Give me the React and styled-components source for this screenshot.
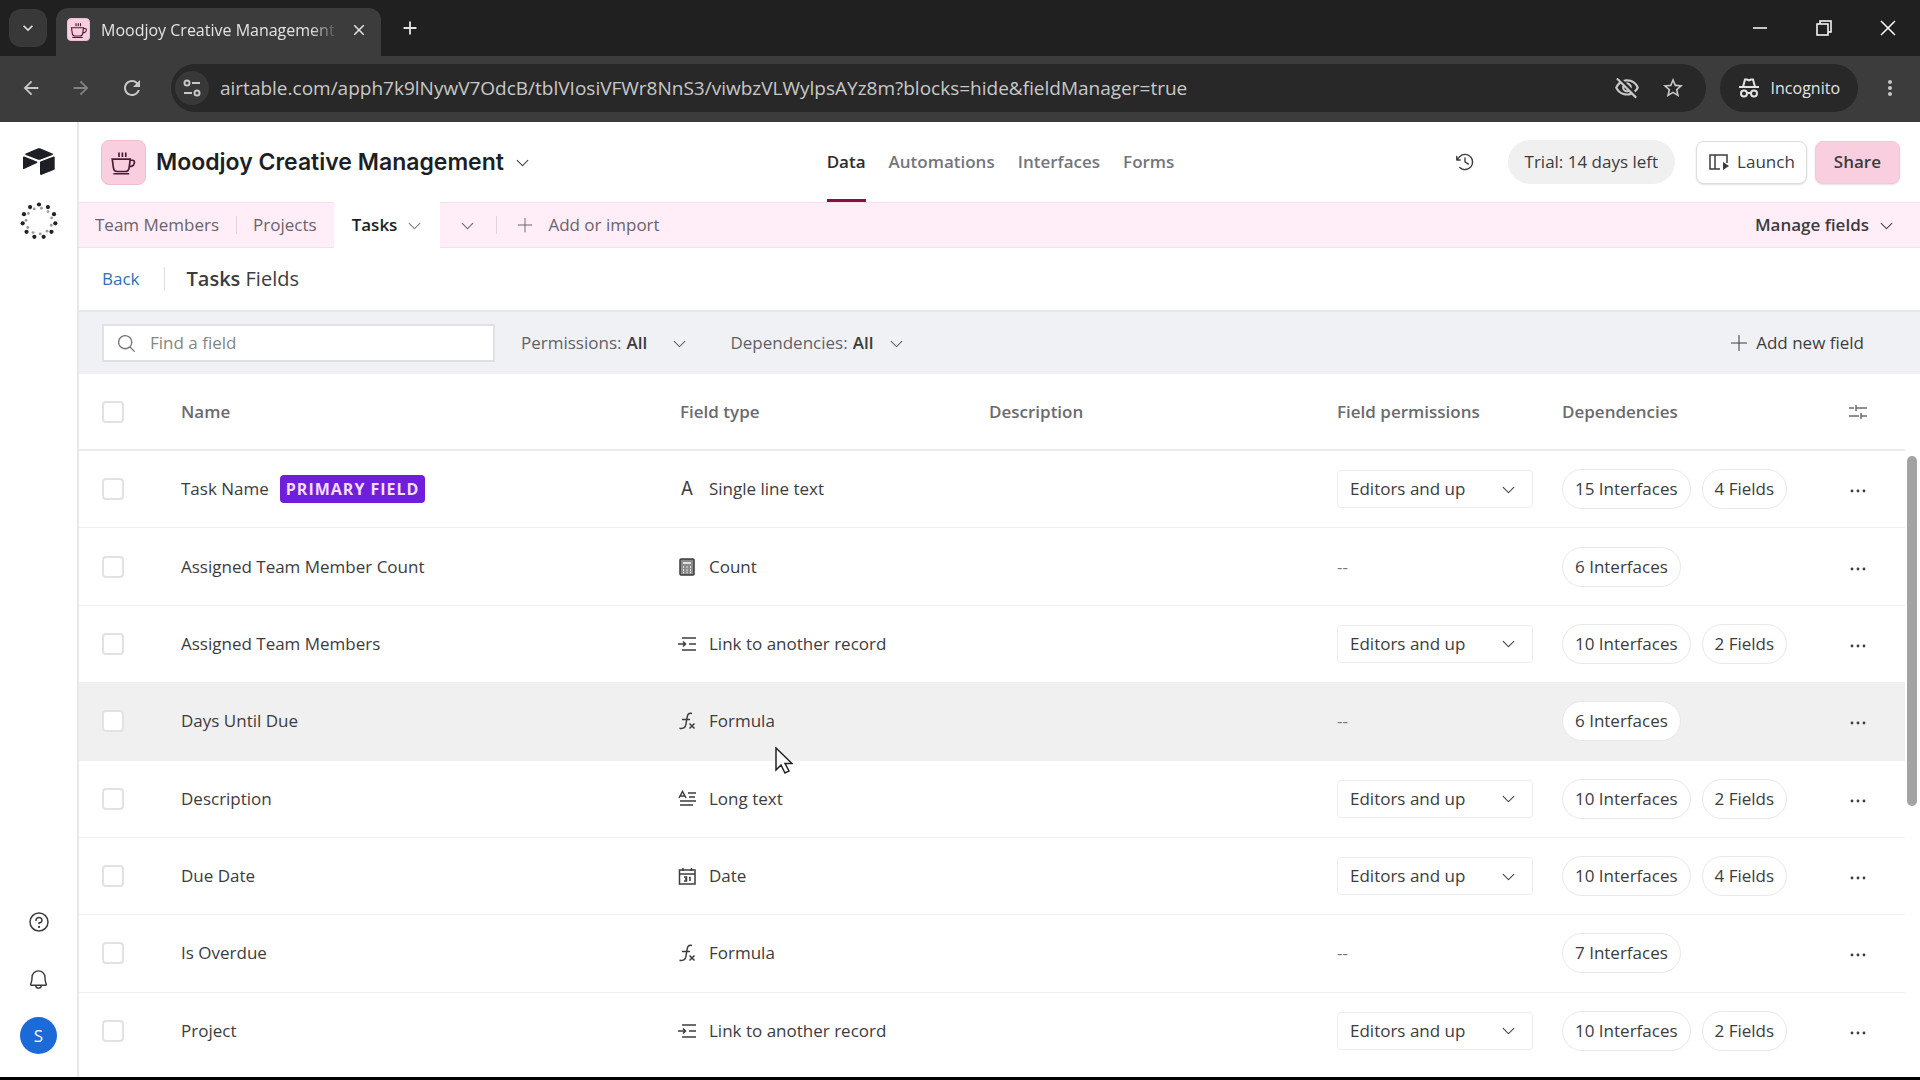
import React from "react";
import styled, { createGlobalStyle } from "styled-components";
import {
  PiBell,
  PiCaretDown,
  PiClockCounterClockwise,
  PiMagnifyingGlass,
  PiPlusLight,
  PiQuestion,
} from "react-icons/pi";
import {
  MdArrowBack,
  MdArrowForward,
  MdClose,
  MdKeyboardArrowDown,
  MdMoreVert,
  MdOutlineVisibilityOff,
  MdRefresh,
  MdStarOutline,
  MdAdd,
} from "react-icons/md";

const fields = [
  { name: "Task Name", primary: true, type: "Single line text", icon: "text", editable: true, deps: ["15 Interfaces", "4 Fields"] },
  { name: "Assigned Team Member Count", type: "Count", icon: "count", deps: ["6 Interfaces"] },
  { name: "Assigned Team Members", type: "Link to another record", icon: "link", editable: true, deps: ["10 Interfaces", "2 Fields"] },
  { name: "Days Until Due", type: "Formula", icon: "formula", active: true, deps: ["6 Interfaces"] },
  { name: "Description", type: "Long text", icon: "long", editable: true, deps: ["10 Interfaces", "2 Fields"] },
  { name: "Due Date", type: "Date", icon: "date", editable: true, deps: ["10 Interfaces", "4 Fields"] },
  { name: "Is Overdue", type: "Formula", icon: "formula", deps: ["7 Interfaces"] },
  { name: "Project", type: "Link to another record", icon: "link", editable: true, deps: ["10 Interfaces", "2 Fields"] },
];

const typeIcons = {
  count: (
    <>
      <rect x="2" y="1" width="14" height="16" rx="1" fill="#8b8b8b" />
      <path d="M5 5h8M5 9h1M8.5 9h1M12 9h1M5 12h1M8.5 12h1M12 12h1M5 14.5h1M8.5 14.5h1M12 14.5h1" stroke="#fff" strokeWidth="1.7" />
    </>
  ),
  link: <path d="M4 3h14M11 9h7M4 15h14M0 9h7M5 6.5L7.5 9L5 11.5" />,
  formula: <path d="M14 1.5c-4-.8-4.5 1.5-5 4.5l-1 6c-.6 3.5-2 5-6.5 4.2M4 7.5h8M11.5 11.5l5 5M16.5 11.5l-5 5" />,
  long: (
    <>
      <path d="M10 3h8M11 7h6M2 11h16M2 15h13" />
      <path d="M1 8L4.5 1.5L8 8M2.5 6h4" />
    </>
  ),
  date: (
    <>
      <path d="M1.5 3h15.5v14H1.5zM1.5 7h15.5M5 1v3M13.5 1v3" />
      <path d="M6 10h2.5v4H6M7 12h1.5M11 10.5h1V14" />
    </>
  ),
};

function TypeIcon({ name }) {
  if (name === "text") return <LetterIcon>A</LetterIcon>;
  return (
    <svg width="18" height="18" viewBox="0 0 18 18" fill="none" stroke="currentColor" strokeWidth="1.5">
      {typeIcons[name]}
    </svg>
  );
}

function CoffeeIcon({ size }) {
  return (
    <svg width={size} height={size} viewBox="0 0 24 24" fill="none" stroke="#4a1c33" strokeWidth="1.5">
      <path d="M2 9h16l-1 7.5q-.5 3.500-3.500 3.500h-7q-3 0-3.500-3.500zM18 10h2q2 0 1.700 2.300T19 15.500h-1.500M3 22h14M8 3v4M11 3v4M14 3v4" />
    </svg>
  );
}

function LoaderIcon() {
  const step = (Math.PI * 2) / 11;
  const angles = [...Array(11).keys()].map((i) => i * step - Math.PI / 2);
  return (
    <svg width="38" height="38" viewBox="-19 -19 38 38">
      {angles.map((a) => (
        <g key={a}>
          <circle cx={16.5 * Math.cos(a)} cy={16.5 * Math.sin(a)} r="2.1" fill="#222" />
          <circle cx={13 * Math.cos(a + step / 3)} cy={13 * Math.sin(a + step / 3)} r="1.4" fill="#999" />
        </g>
      ))}
    </svg>
  );
}

function Caret() {
  return <PiCaretDown size={17} />;
}

export default function App() {
  return (
    <Page>
      <GlobalStyle />
      <TabStrip>
        <TabSearch aria-label="Search tabs">
          <MdKeyboardArrowDown size={20} />
        </TabSearch>
        <BrowserTab>
          <BaseIcon $small>
            <CoffeeIcon size={18} />
          </BaseIcon>
          <TabTitle>Moodjoy Creative Management</TabTitle>
          <PlainButton aria-label="Close tab">
            <MdClose size={18} />
          </PlainButton>
        </BrowserTab>
        <NewTab aria-label="New tab">
          <MdAdd size={22} />
        </NewTab>
        <WindowControls>
          <button aria-label="Minimize">
            <svg width="16" height="16" fill="none" stroke="currentColor" strokeWidth="1.5">
              <path d="M1 8h14" />
            </svg>
          </button>
          <button aria-label="Restore">
            <svg width="16" height="16" fill="none" stroke="currentColor" strokeWidth="1.5">
              <path d="M1 4h11v11H1zM4 4V1h11v11h-3" />
            </svg>
          </button>
          <button aria-label="Close">
            <svg width="16" height="16" fill="none" stroke="currentColor" strokeWidth="1.5">
              <path d="M1 1l14 14M15 1L1 15" />
            </svg>
          </button>
        </WindowControls>
      </TabStrip>

      <Toolbar>
        <NavButtons>
          <PlainButton aria-label="Back">
            <MdArrowBack size={22} />
          </PlainButton>
          <PlainButton aria-label="Forward" $dim>
            <MdArrowForward size={22} />
          </PlainButton>
          <PlainButton aria-label="Reload">
            <MdRefresh size={24} />
          </PlainButton>
        </NavButtons>
        <AddressBar>
          <SiteInfo aria-label="Site information">
            <svg width="20" height="20" fill="none" stroke="currentColor" strokeWidth="2">
              <circle cx="5" cy="5" r="2.5" />
              <path d="M10 5h8M2 15h8" />
              <circle cx="15" cy="15" r="2.5" />
            </svg>
          </SiteInfo>
          <Address
            aria-label="Address"
            readOnly
            value="airtable.com/apph7k9lNywV7OdcB/tblVIosiVFWr8NnS3/viwbzVLWylpsAYz8m?blocks=hide&fieldManager=true"
          />
          <MdOutlineVisibilityOff size={26} />
          <MdStarOutline size={24} />
        </AddressBar>
        <Incognito>
          <svg width="22" height="22" viewBox="0 0 22 22" fill="none" stroke="currentColor" strokeWidth="2">
            <path d="M1 10h20M5 10L7 2.5h2l2 1 2-1h2L17 10" />
            <circle cx="6" cy="16.5" r="3" />
            <circle cx="16" cy="16.5" r="3" />
            <path d="M9 16h4" />
          </svg>
          Incognito
        </Incognito>
        <PlainButton aria-label="Menu">
          <MdMoreVert size={24} />
        </PlainButton>
      </Toolbar>

      <Workspace>
        <Sidebar>
          <svg width="32" height="28" viewBox="0 0 32 28" fill="#1d1f25">
            <path d="M14.5.6L2.8 5.4c-.7.3-.7 1.2 0 1.5l11.8 4.6c1 .4 2.1.4 3.1 0l11.7-4.6c.7-.3.7-1.2 0-1.5L17.6.6c-1-.4-2.1-.4-3.1 0z" />
            <path d="M17 14.3v11.8c0 .6.6 1 1.1.8l13.1-5.1c.3-.1.5-.4.5-.8V9.3c0-.6-.6-1-1.1-.8l-13.1 5c-.3.1-.5.5-.5.8z" />
            <path d="M14 14.9l-3.9 1.9-9.1 4.3c-.5.2-1-.1-1-.6V9.4c0-.7.8-1.1 1.3-.9l12.5 4.9c.7.3.8 1.2.2 1.5z" />
          </svg>
          <LoaderIcon />
          <HelpButton aria-label="Help">
            <PiQuestion size={24} />
          </HelpButton>
          <PlainButton aria-label="Notifications">
            <PiBell size={23} />
          </PlainButton>
          <Avatar>S</Avatar>
        </Sidebar>

        <Main>
          <BaseHeader>
            <BaseName>
              <BaseIcon>
                <CoffeeIcon size={27} />
              </BaseIcon>
              <h1>Moodjoy Creative Management</h1>
              <Caret />
            </BaseName>
            <Nav>
              <NavLink href="#data" $active>Data</NavLink>
              <NavLink href="#automations">Automations</NavLink>
              <NavLink href="#interfaces">Interfaces</NavLink>
              <NavLink href="#forms">Forms</NavLink>
            </Nav>
            <HeaderActions>
              <PlainButton aria-label="History">
                <PiClockCounterClockwise size={22} />
              </PlainButton>
              <Trial>Trial: 14 days left</Trial>
              <ActionButton>
                <svg width="22" height="20" fill="none" stroke="currentColor" strokeWidth="1.5">
                  <path d="M12 17H2V3h17v8M7 3v14" />
                  <path d="M15 10l6 4-6 4z" fill="currentColor" stroke="none" />
                </svg>
                Launch
              </ActionButton>
              <ActionButton $pink>Share</ActionButton>
            </HeaderActions>
          </BaseHeader>

          <TableTabs>
            <TableTab>Team Members</TableTab>
            <Divider />
            <TableTab>Projects</TableTab>
            <TableTab $active>
              Tasks <Caret />
            </TableTab>
            <MoreTables aria-label="All tables">
              <Caret />
            </MoreTables>
            <Divider />
            <AddTable>
              <PiPlusLight size={20} />
              Add or import
            </AddTable>
            <ManageFields>
              Manage fields <Caret />
            </ManageFields>
          </TableTabs>

          <TitleRow>
            <BackLink href="#back">Back</BackLink>
            <h2>
              <b>Tasks</b> Fields
            </h2>
          </TitleRow>

          <FilterBar>
            <Search>
              <PiMagnifyingGlass size={21} />
              <input type="text" placeholder="Find a field" aria-label="Find a field" />
            </Search>
            <Filter $gap={24}>
              Permissions:
              <select defaultValue="All">
                <option>All</option>
              </select>
              <Caret />
            </Filter>
            <Filter $gap={14}>
              Dependencies:
              <select defaultValue="All">
                <option>All</option>
              </select>
              <Caret />
            </Filter>
            <AddField>
              <PiPlusLight size={22} />
              Add new field
            </AddField>
          </FilterBar>

          <TableArea>
            <Table>
              <colgroup>
                <Col $w="102px" />
                <Col $w="499px" />
                <Col $w="309px" />
                <Col />
                <Col $w="225px" />
                <Col $w="248px" />
                <Col $w="95px" />
              </colgroup>
              <thead>
                <tr>
                  <CheckHead>
                    <Checkbox type="checkbox" aria-label="Select all fields" />
                  </CheckHead>
                  <Th>Name</Th>
                  <Th>Field type</Th>
                  <Th>Description</Th>
                  <Th>Field permissions</Th>
                  <Th>Dependencies</Th>
                  <Th $center>
                    <svg width="18" height="18" fill="none" stroke="currentColor" strokeWidth="1.5">
                      <path d="M0 5h5M7 2v6M7 5h11M0 13h10M12 10v6M12 13h6" />
                    </svg>
                  </Th>
                </tr>
              </thead>
              <tbody>
                {fields.map((field) => (
                  <Row key={field.name} $active={field.active}>
                    <CheckCell>
                      <Checkbox type="checkbox" aria-label={`Select ${field.name}`} />
                    </CheckCell>
                    <Td>
                      <FieldName>
                        {field.name}
                        {field.primary && <Badge>PRIMARY FIELD</Badge>}
                      </FieldName>
                    </Td>
                    <Td>
                      <FieldType>
                        <TypeIcon name={field.icon} />
                        {field.type}
                        {field.active && (
                          <Cursor viewBox="0 0 18 28">
                            <path d="M1 1v22l5-5 4 8 4-2-4-7.5h7z" fill="#fff" stroke="#222" strokeWidth="1.5" />
                          </Cursor>
                        )}
                      </FieldType>
                    </Td>
                    <Td />
                    <Td>
                      {field.editable ? (
                        <Permission>
                          <select defaultValue="Editors and up" aria-label={`${field.name} permissions`}>
                            <option>Editors and up</option>
                          </select>
                          <Caret />
                        </Permission>
                      ) : (
                        <Muted>--</Muted>
                      )}
                    </Td>
                    <Td>
                      <Pills>
                        {field.deps.map((dep) => (
                          <Pill key={dep}>{dep}</Pill>
                        ))}
                      </Pills>
                    </Td>
                    <Td $center>
                      <PlainButton aria-label={`${field.name} options`}>
                        <svg width="16" height="16" fill="currentColor">
                          <circle cx="2" cy="10" r="1.4" />
                          <circle cx="8" cy="10" r="1.4" />
                          <circle cx="14" cy="10" r="1.4" />
                        </svg>
                      </PlainButton>
                    </Td>
                  </Row>
                ))}
              </tbody>
            </Table>
            <Scrollbar>
              <ScrollThumb />
            </Scrollbar>
          </TableArea>
        </Main>
      </Workspace>
    </Page>
  );
}

const GlobalStyle = createGlobalStyle`
  * {
    box-sizing: border-box;
  }

  body {
    margin: 0;
    font-family: "Open Sans", "Noto Sans", sans-serif;
    font-size: 17px;
    line-height: 24px;
    color: #3c3c3e;
  }

  button,
  input,
  select {
    font: inherit;
    color: inherit;
  }

  button {
    display: flex;
    align-items: center;
    border: none;
    padding: 0;
    background: none;
    white-space: nowrap;
  }

  select {
    appearance: none;
    border: none;
    padding: 0;
    background: none;
  }

  svg {
    flex-shrink: 0;
  }
`;

const Page = styled.div`
  display: flex;
  flex-direction: column;
  height: 100vh;
  overflow: hidden;
  background: #fff;
  border-bottom: 3px solid #000;
`;

const PlainButton = styled.button`
  opacity: ${(p) => (p.$dim ? 0.5 : 1)};
`;

const TabStrip = styled.div`
  display: flex;
  align-items: center;
  height: 56px;
  padding-left: 9px;
  background: #202020;
  color: #e3e3e3;
`;

const TabSearch = styled.button`
  justify-content: center;
  width: 38px;
  height: 38px;
  border-radius: 12px;
  background: #383838;
`;

const BrowserTab = styled.div`
  display: flex;
  align-items: center;
  align-self: flex-end;
  gap: 11px;
  width: 325px;
  height: 48px;
  margin-left: 9px;
  padding: 0 13px 5px 11px;
  border-radius: 12px 12px 0 0;
  background: #3c3c3c;
`;

const TabTitle = styled.span`
  flex: 1;
  overflow: hidden;
  white-space: nowrap;
  font-size: 16px;
  mask-image: linear-gradient(to right, #000 88%, transparent);
`;

const NewTab = styled.button`
  margin-left: 18px;
`;

const WindowControls = styled.div`
  display: flex;
  gap: 48px;
  margin-left: auto;
  padding-right: 24px;
  color: #fff;
`;

const Toolbar = styled.div`
  display: flex;
  align-items: center;
  height: 66px;
  padding: 0 18px 2px 0;
  background: #3c3c3c;
  color: #c8c8c8;
`;

const NavButtons = styled.div`
  display: flex;
  align-items: center;
  gap: 28px;
  width: 171px;
  padding-left: 20px;
`;

const AddressBar = styled.div`
  display: flex;
  flex: 1;
  align-items: center;
  gap: 21px;
  height: 48px;
  padding: 0 21px 0 4px;
  border-radius: 24px;
  background: #282828;
`;

const SiteInfo = styled.button`
  justify-content: center;
  width: 34px;
  height: 34px;
  border-radius: 17px;
  background: #383838;
`;

const Address = styled.input`
  flex: 1;
  margin-left: -10px;
  padding: 0;
  border: none;
  outline: none;
  background: none;
  font-size: 19px;
`;

const Incognito = styled.div`
  display: flex;
  align-items: center;
  gap: 11px;
  height: 48px;
  margin: 0 20px 0 14px;
  padding: 0 18px;
  border-radius: 24px;
  background: #282828;
  color: #e3e3e3;
  font-size: 16px;
`;

const Workspace = styled.div`
  display: flex;
  flex: 1;
  min-height: 0;
`;

const Sidebar = styled.aside`
  display: flex;
  flex-direction: column;
  align-items: center;
  gap: 26px;
  width: 79px;
  padding: 26px 0 23px;
  border-right: 2px solid #e8e8e8;
`;

const HelpButton = styled.button`
  margin: auto 0 8px;
`;

const Avatar = styled.div`
  width: 37px;
  border-radius: 50%;
  background: #1b6ad8;
  color: #fff;
  line-height: 37px;
  text-align: center;
`;

const Main = styled.main`
  display: flex;
  flex: 1;
  flex-direction: column;
  min-width: 0;
`;

const BaseHeader = styled.header`
  display: grid;
  grid-template-columns: 1fr auto 1fr;
  align-items: center;
  height: 80px;
  padding: 0 20px 0 22px;
`;

const BaseIcon = styled.div`
  display: flex;
  align-items: center;
  justify-content: center;
  flex-shrink: 0;
  width: ${(p) => (p.$small ? "23px" : "45px")};
  height: ${(p) => (p.$small ? "23px" : "45px")};
  border: 1px solid #efbdd2;
  border-radius: ${(p) => (p.$small ? "4px" : "8px")};
  background: #f9cfe0;
`;

const BaseName = styled.div`
  display: flex;
  align-items: center;
  gap: 10px;

  h1 {
    margin: 0;
    color: #1d1f25;
    font-family: Inter, sans-serif;
    font-size: 23px;
    font-weight: 600;
    white-space: nowrap;
  }
`;

const Nav = styled.nav`
  display: flex;
  align-self: stretch;
  gap: 23px;
`;

const NavLink = styled.a`
  padding-top: 28px;
  border-bottom: 3px solid ${(p) => (p.$active ? "#8a0f42" : "transparent")};
  color: ${(p) => (p.$active ? "#2b2d33" : "#74767c")};
  font-weight: 600;
  text-decoration: none;
`;

const HeaderActions = styled.div`
  display: flex;
  align-items: center;
  justify-content: flex-end;
  white-space: nowrap;
`;

const Trial = styled.span`
  margin: 0 21px 0 32px;
  padding: 10px 17px;
  border-radius: 22px;
  background: #f0f0f0;
`;

const ActionButton = styled.button`
  gap: 7px;
  height: 43px;
  margin-left: ${(p) => (p.$pink ? "8px" : "0")};
  padding: 0 ${(p) => (p.$pink ? "18px" : "11px")};
  border: 1px solid ${(p) => (p.$pink ? "#f5c6da" : "#dcdcdc")};
  border-radius: 8px;
  background: ${(p) => (p.$pink ? "#f9cfe0" : "#fff")};
  box-shadow: 0 1px 2px rgba(0, 0, 0, 0.12);
  font-weight: ${(p) => (p.$pink ? 600 : 400)};
`;

const TableTabs = styled.div`
  display: flex;
  align-items: center;
  height: 46px;
  border-top: 1px solid #f0e2ea;
  border-bottom: 1px solid #f0e2ea;
  background: #ffeef8;
  color: #6b626a;
`;

const TableTab = styled.button`
  gap: 9px;
  height: 46px;
  padding: 0 17px 0 ${(p) => (p.$active ? "18px" : "16px")};
  background: ${(p) => (p.$active ? "#fff" : "none")};
  color: ${(p) => (p.$active ? "#1d1f25" : "inherit")};
  font-weight: ${(p) => (p.$active ? 600 : 400)};

  svg {
    color: #777;
  }
`;

const Divider = styled.div`
  width: 1px;
  height: 18px;
  background: #e4d3dc;
`;

const MoreTables = styled.button`
  padding: 0 20px 0 19px;
`;

const AddTable = styled.button`
  gap: 13px;
  padding-left: 18px;
`;

const ManageFields = styled.button`
  gap: 9px;
  margin-left: auto;
  padding-right: 25px;
  color: #3c3c3e;
  font-weight: 600;
`;

const TitleRow = styled.div`
  display: flex;
  align-items: center;
  height: 62px;
  padding-left: 23px;

  h2 {
    margin: 0 0 0 24px;
    padding-left: 22px;
    border-left: 1px solid #e0e0e0;
    font-size: 20px;
    font-weight: 400;
  }

  b {
    font-weight: 600;
  }
`;

const BackLink = styled.a`
  color: #2f70bd;
  text-decoration: none;
`;

const FilterBar = styled.div`
  display: flex;
  align-items: center;
  height: 64px;
  padding: 0 56px 0 23px;
  border-top: 2px solid #e6e7ea;
  background: #f0f1f5;
`;

const Search = styled.div`
  display: flex;
  align-items: center;
  gap: 13px;
  width: 393px;
  height: 38px;
  padding: 0 12px;
  border: 2px solid #e0e1e5;
  background: #fff;
  color: #777;

  input {
    flex: 1;
    min-width: 0;
    padding: 0;
    border: none;
    outline: none;
    background: none;
  }

  input::placeholder {
    color: #858585;
  }
`;

const Filter = styled.label`
  display: flex;
  align-items: center;
  margin-left: 26px;
  color: #5f6165;
  white-space: nowrap;

  & + & {
    margin-left: 42px;
  }

  select {
    margin: 0 ${(p) => p.$gap}px 0 5px;
    color: #3c3c3e;
    font-weight: 600;
  }
`;

const AddField = styled.button`
  gap: 6px;
  margin-left: auto;
`;

const TableArea = styled.div`
  display: flex;
  flex: 1;
  min-height: 0;
  padding-bottom: 7px;
`;

const Table = styled.table`
  flex: 1;
  width: 100%;
  height: 100%;
  border-collapse: separate;
  border-spacing: 0;
  table-layout: fixed;
`;

const Col = styled.col`
  width: ${(p) => p.$w || "auto"};
`;

const Th = styled.th`
  height: 77px;
  padding: 0;
  border-bottom: 2px solid #ebebeb;
  color: #6b6b6e;
  font-weight: 600;
  text-align: ${(p) => (p.$center ? "center" : "left")};

  svg {
    display: block;
    margin: auto;
  }
`;

const CheckHead = styled(Th)`
  padding-left: 23px;
`;

const Td = styled.td`
  height: 77px;
  padding: 0;
  border-bottom: 1px solid #f0f0f0;

  > button {
    margin: ${(p) => (p.$center ? "auto" : "0")};
  }
`;

const CheckCell = styled(Td)`
  padding-left: 23px;
`;

const Row = styled.tr`
  background: ${(p) => (p.$active ? "#f0f0f0" : "none")};

  &:last-child td {
    border-color: transparent;
  }
`;

const Checkbox = styled.input`
  display: block;
  appearance: none;
  width: 22px;
  height: 22px;
  margin: 0;
  border: 2px solid #e2e2e2;
  border-radius: 4px;
  background: #fff;
`;

const FieldName = styled.div`
  display: flex;
  align-items: center;
  gap: 11px;
`;

const Badge = styled.span`
  padding: 2px 6px;
  border-radius: 4px;
  background: #6f1fdc;
  color: #f5dcff;
  font-size: 16px;
  font-weight: 700;
  letter-spacing: 1px;
`;

const FieldType = styled.div`
  display: flex;
  position: relative;
  align-items: center;
  gap: 13px;
  margin-left: -2px;
`;

const LetterIcon = styled.span`
  width: 18px;
  font-family: Inter, sans-serif;
  font-size: 18px;
  text-align: center;
`;

const Cursor = styled.svg`
  position: absolute;
  left: 97px;
  top: 38px;
  width: 18px;
  height: 28px;
`;

const Permission = styled.div`
  display: flex;
  align-items: center;
  width: 196px;
  height: 38px;
  padding: 0 15px 0 12px;
  border: 1px solid #ededed;
  border-radius: 4px;
  background: #fff;

  select {
    flex: 1;
  }
`;

const Muted = styled.span`
  color: #777;
`;

const Pills = styled.div`
  display: flex;
  gap: 11px;
`;

const Pill = styled.span`
  padding: 7px 12px;
  border: 1px solid #e8e8e8;
  border-radius: 20px;
  background: #fff;
  white-space: nowrap;
`;

const Scrollbar = styled.div`
  width: 15px;
  padding: 82px 3px 0 2px;
`;

const ScrollThumb = styled.div`
  height: 57%;
  border-radius: 5px;
  background: #a3a3a3;
`;
